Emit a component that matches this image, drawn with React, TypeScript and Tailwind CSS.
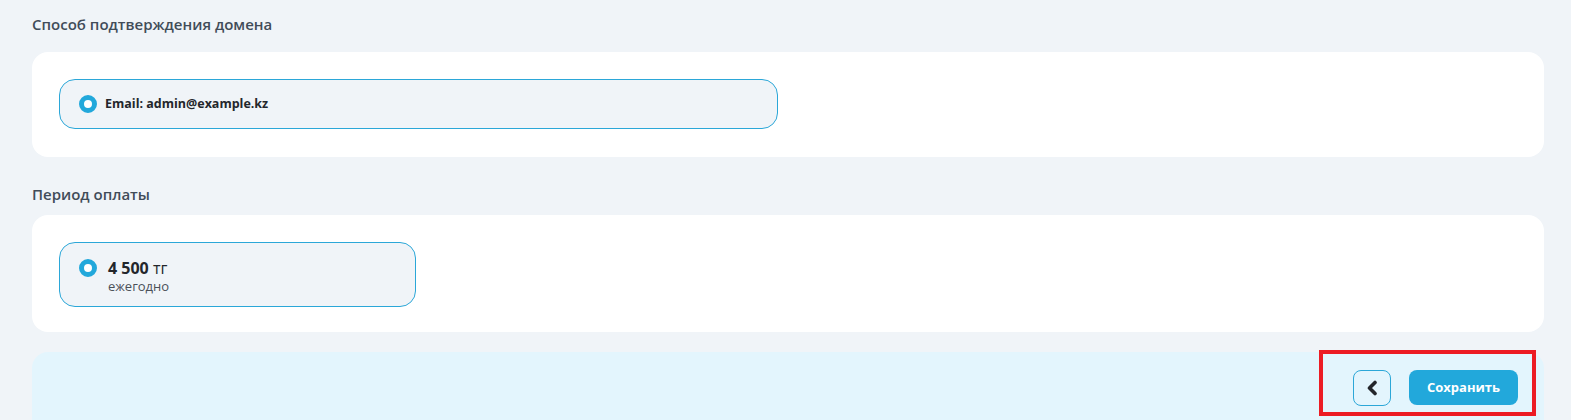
const Radio = () => (
  <span className="block w-[18px] h-[18px] shrink-0 rounded-full border-[5px] border-[#22a8db] bg-white" />
)

export default function App() {
  return (
    <div
      className="min-h-[420px] bg-[#f0f4f8] pl-8 pr-[27px] pt-[14px] overflow-hidden"
      style={{ fontFamily: '"Open Sans", "Noto Sans", sans-serif' }}
    >
      <h2 className="text-[15px] leading-5 font-semibold text-[#414c58]">
        Способ подтверждения домена
      </h2>

      <div className="mt-[18px] rounded-2xl bg-white pt-[27px] pb-[28px] pl-[27px]">
        <label className="flex h-[50px] w-[719px] items-center gap-[8px] rounded-2xl border border-[#2ba7d8] bg-[#f0f4f8] pl-[19px]">
          <Radio />
          <span className="text-[12.5px] font-bold text-[#23262b]">
            Email: admin@example.kz
          </span>
        </label>
      </div>

      <h2 className="mt-[27px] text-[15px] leading-5 font-semibold text-[#414c58]">
        Период оплаты
      </h2>

      <div className="mt-[11px] rounded-2xl bg-white pt-[27px] pb-[25px] pl-[27px]">
        <label className="flex h-[65px] w-[357px] items-start gap-[11px] rounded-2xl border border-[#2ba7d8] bg-[#f0f4f8] pl-[19px] pt-[15px]">
          <span className="mt-[1px]">
            <Radio />
          </span>
          <span className="flex flex-col">
            <span className="text-[16px] leading-5 text-[#23262b]">
              <span className="font-bold">4 500</span> тг
            </span>
            <span className="text-[13px] leading-4 text-[#4b5058]">ежегодно</span>
          </span>
        </label>
      </div>

      <div className="mt-5 flex h-[80px] justify-end rounded-t-2xl bg-[#e3f5fd] pr-[26px] pt-[18px]">
        <div className="relative flex h-[36px] gap-[18px]">
          <span className="pointer-events-none absolute -left-[34px] -right-[18px] -top-[20px] h-[66px] border-[4px] border-[#ec1c24]" />
          <button className="flex h-[36px] w-[38px] items-center justify-center rounded-lg border border-[#2ba7d8] bg-[#e3f5fd]">
            <svg width="12" height="16" viewBox="0 0 12 16" fill="none">
              <path
                d="M9 2.5 L3.5 8 L9 13.5"
                stroke="#23262b"
                strokeWidth="3.6"
                strokeLinecap="round"
                strokeLinejoin="round"
              />
            </svg>
          </button>
          <button className="h-[35px] w-[109px] rounded-lg bg-[#22a8db] text-[13px] font-bold text-white">
            Сохранить
          </button>
        </div>
      </div>
    </div>
  )
}
